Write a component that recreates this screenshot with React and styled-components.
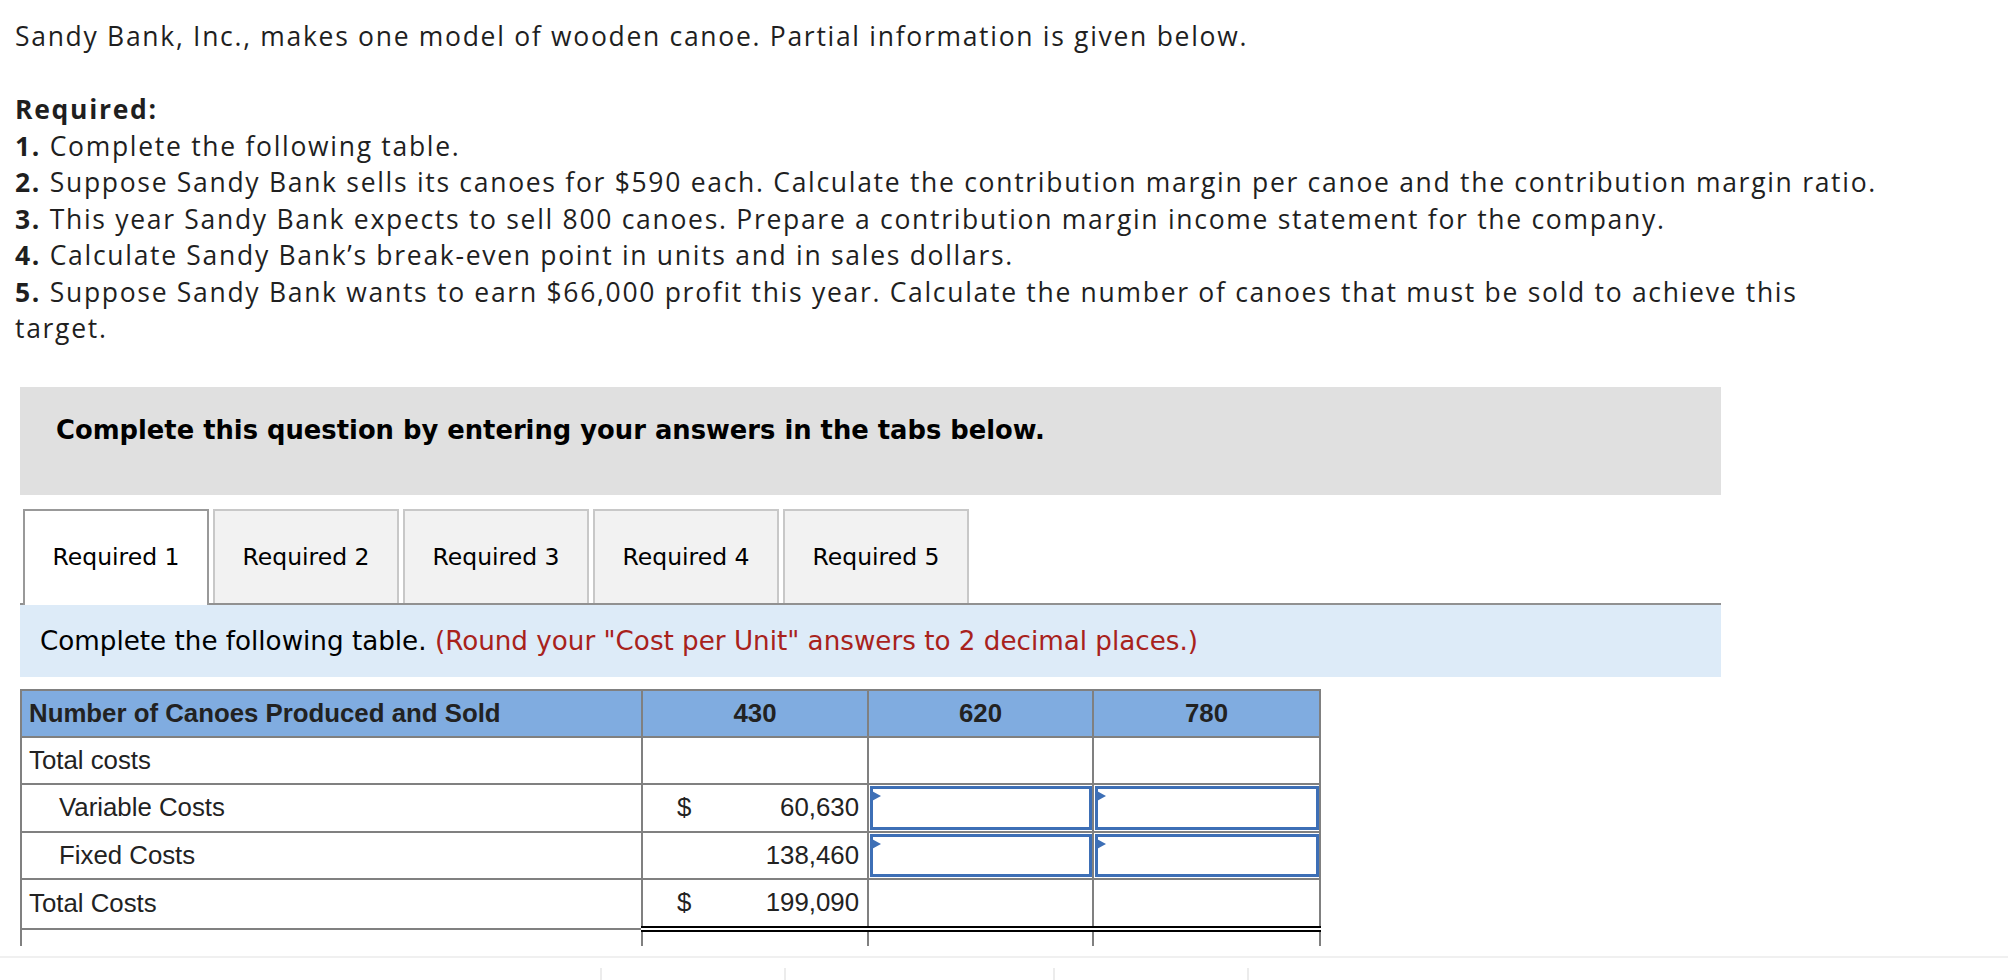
import React from "react";
import styled, { createGlobalStyle } from "styled-components";

const GlobalStyle = createGlobalStyle`
  html, body {
    margin: 0;
    padding: 0;
    background: #fff;
  }
  body {
    width: 2008px;
    overflow: hidden;
  }
`;

const Page = styled.div`
  padding-top: 18px;
`;

const Question = styled.div`
  width: 1871px;
  padding-left: 15px;
  font-family: "Open Sans", "Liberation Sans", sans-serif;
  font-size: 26.5px;
  letter-spacing: 1.7px;
  line-height: 36.5px;
  color: #1f1f1f;

  p {
    margin: 0;
  }

  p.intro {
    margin-bottom: 36.5px;
  }

  b {
    display: inline-block;
    font-weight: 700;
  }
`;

const Panel = styled.div`
  width: 1701px;
  margin: 40px 0 0 20px;
  font-family: "DejaVu Sans", Verdana, sans-serif;
`;

const Banner = styled.div`
  box-sizing: border-box;
  height: 108px;
  padding: 28px 0 0 36px;
  background: #e0e0e0;
  font-size: 25.8px;
  line-height: 30px;
  font-weight: 700;
  color: #000;
`;

const TabRow = styled.div`
  display: flex;
  align-items: flex-end;
  gap: 4px;
  height: 94px;
  margin-top: 14px;
  padding-left: 3px;
  border-bottom: 2px solid #919191;
`;

const Tab = styled.div`
  box-sizing: border-box;
  width: 186px;
  height: ${(p) => (p.$active ? "96px" : "94px")};
  margin-bottom: ${(p) => (p.$active ? "-2px" : "0")};
  display: flex;
  align-items: center;
  justify-content: center;
  padding-bottom: ${(p) => (p.$active ? "2px" : "0")};
  border: 2px solid ${(p) => (p.$active ? "#999" : "#c8c8c8")};
  border-bottom: none;
  background: ${(p) => (p.$active ? "#fff" : "#f2f2f2")};
  font-size: 23.5px;
  color: #000;
`;

const Instruction = styled.div`
  box-sizing: border-box;
  height: 72px;
  display: flex;
  align-items: center;
  padding-left: 20px;
  background: #ddebf8;
  font-size: 26.2px;
  color: #000;

  span {
    margin-left: 0.32em;
    color: #a8221c;
  }
`;

const TableWrap = styled.div`
  margin-top: 12px;
  height: 257px;
  overflow: hidden;
`;

const Table = styled.table`
  border-collapse: collapse;
  table-layout: fixed;
  width: 1299px;
  font-family: "Liberation Sans", Arial, sans-serif;
  font-size: 25.8px;
  color: #222;
`;

const Th = styled.th`
  height: 45px;
  padding: 0 7px;
  border: 2px solid #808080;
  background: #80ace0;
  font-weight: 700;
  text-align: ${(p) => (p.$left ? "left" : "center")};
`;

const Label = styled.td`
  height: 45.5px;
  padding: 0 0 0 ${(p) => (p.$indent ? "37px" : "7px")};
  border: 2px solid #808080;
  white-space: nowrap;
`;

const Cell = styled.td`
  height: 45.5px;
  padding: 0;
  border: 2px solid #808080;
  ${(p) =>
    p.$total &&
    `
    border-top: 2px solid #000;
    border-bottom: 6px double #000;
  `}
`;

const Amount = styled.div`
  display: flex;
  justify-content: space-between;
  padding: 0 8px 0 34px;
`;

const InputBox = styled.div`
  position: relative;
  box-sizing: border-box;
  height: 43.5px;
  margin: 1px 0 1px 1px;
  border: 3px solid #3d6fb6;
  background: #fff;
`;

const Flag = styled.div`
  position: absolute;
  left: -3px;
  top: 1px;
  width: 0;
  height: 0;
  border-top: 6px solid transparent;
  border-bottom: 6px solid transparent;
  border-left: 11px solid #3d6fb6;
`;

const Footer = styled.div`
  display: flex;
  margin-top: 10px;
  height: 25px;
  border-top: 2px solid #f0f0f0;
`;

const FooterCell = styled.div`
  box-sizing: border-box;
  width: ${(p) => p.$w}px;
  margin-top: 10px;
  border-left: ${(p) => (p.$first ? "none" : "2px solid #ececec")};
`;

const tabs = ["Required 1", "Required 2", "Required 3", "Required 4", "Required 5"];

const Input = () => (
  <Cell>
    <InputBox>
      <Flag />
    </InputBox>
  </Cell>
);

export default function App() {
  return (
    <>
      <GlobalStyle />
      <Page>
        <Question>
          <p className="intro">
            Sandy Bank, Inc., makes one model of wooden canoe. Partial information is given below.
          </p>
          <p>
            <b>Required:</b>
          </p>
          <p>
            <b>1.</b> Complete the following table.
          </p>
          <p>
            <b>2.</b> Suppose Sandy Bank sells its canoes for $590 each. Calculate the contribution margin per
            canoe and the contribution margin ratio.
          </p>
          <p>
            <b>3.</b> This year Sandy Bank expects to sell 800 canoes. Prepare a contribution margin income
            statement for the company.
          </p>
          <p>
            <b>4.</b> Calculate Sandy Bank’s break-even point in units and in sales dollars.
          </p>
          <p>
            <b>5.</b> Suppose Sandy Bank wants to earn $66,000 profit this year. Calculate the number of canoes
            that must be sold to achieve this target.
          </p>
        </Question>

        <Panel>
          <Banner>Complete this question by entering your answers in the tabs below.</Banner>

          <TabRow>
            {tabs.map((t, i) => (
              <Tab key={t} $active={i === 0}>
                {t}
              </Tab>
            ))}
          </TabRow>

          <Instruction>
            Complete the following table.
            <span>(Round your "Cost per Unit" answers to 2 decimal places.)</span>
          </Instruction>

          <TableWrap>
            <Table>
              <colgroup>
                <col style={{ width: 621 }} />
                <col style={{ width: 226 }} />
                <col style={{ width: 225 }} />
                <col style={{ width: 227 }} />
              </colgroup>
              <thead>
                <tr>
                  <Th $left>Number of Canoes Produced and Sold</Th>
                  <Th>430</Th>
                  <Th>620</Th>
                  <Th>780</Th>
                </tr>
              </thead>
              <tbody>
                <tr>
                  <Label>Total costs</Label>
                  <Cell />
                  <Cell />
                  <Cell />
                </tr>
                <tr>
                  <Label $indent>Variable Costs</Label>
                  <Cell>
                    <Amount>
                      <span>$</span>
                      <span>60,630</span>
                    </Amount>
                  </Cell>
                  <Input />
                  <Input />
                </tr>
                <tr>
                  <Label $indent>Fixed Costs</Label>
                  <Cell>
                    <Amount>
                      <span />
                      <span>138,460</span>
                    </Amount>
                  </Cell>
                  <Input />
                  <Input />
                </tr>
                <tr>
                  <Label>Total Costs</Label>
                  <Cell $total>
                    <Amount>
                      <span>$</span>
                      <span>199,090</span>
                    </Amount>
                  </Cell>
                  <Cell $total />
                  <Cell $total />
                </tr>
                <tr>
                  <Label />
                  <Cell />
                  <Cell />
                  <Cell />
                </tr>
              </tbody>
            </Table>
          </TableWrap>
        </Panel>

        <Footer>
          <FooterCell $first $w={600} />
          <FooterCell $w={184} />
          <FooterCell $w={269} />
          <FooterCell $w={194} />
          <FooterCell $w={761} />
        </Footer>
      </Page>
    </>
  );
}
